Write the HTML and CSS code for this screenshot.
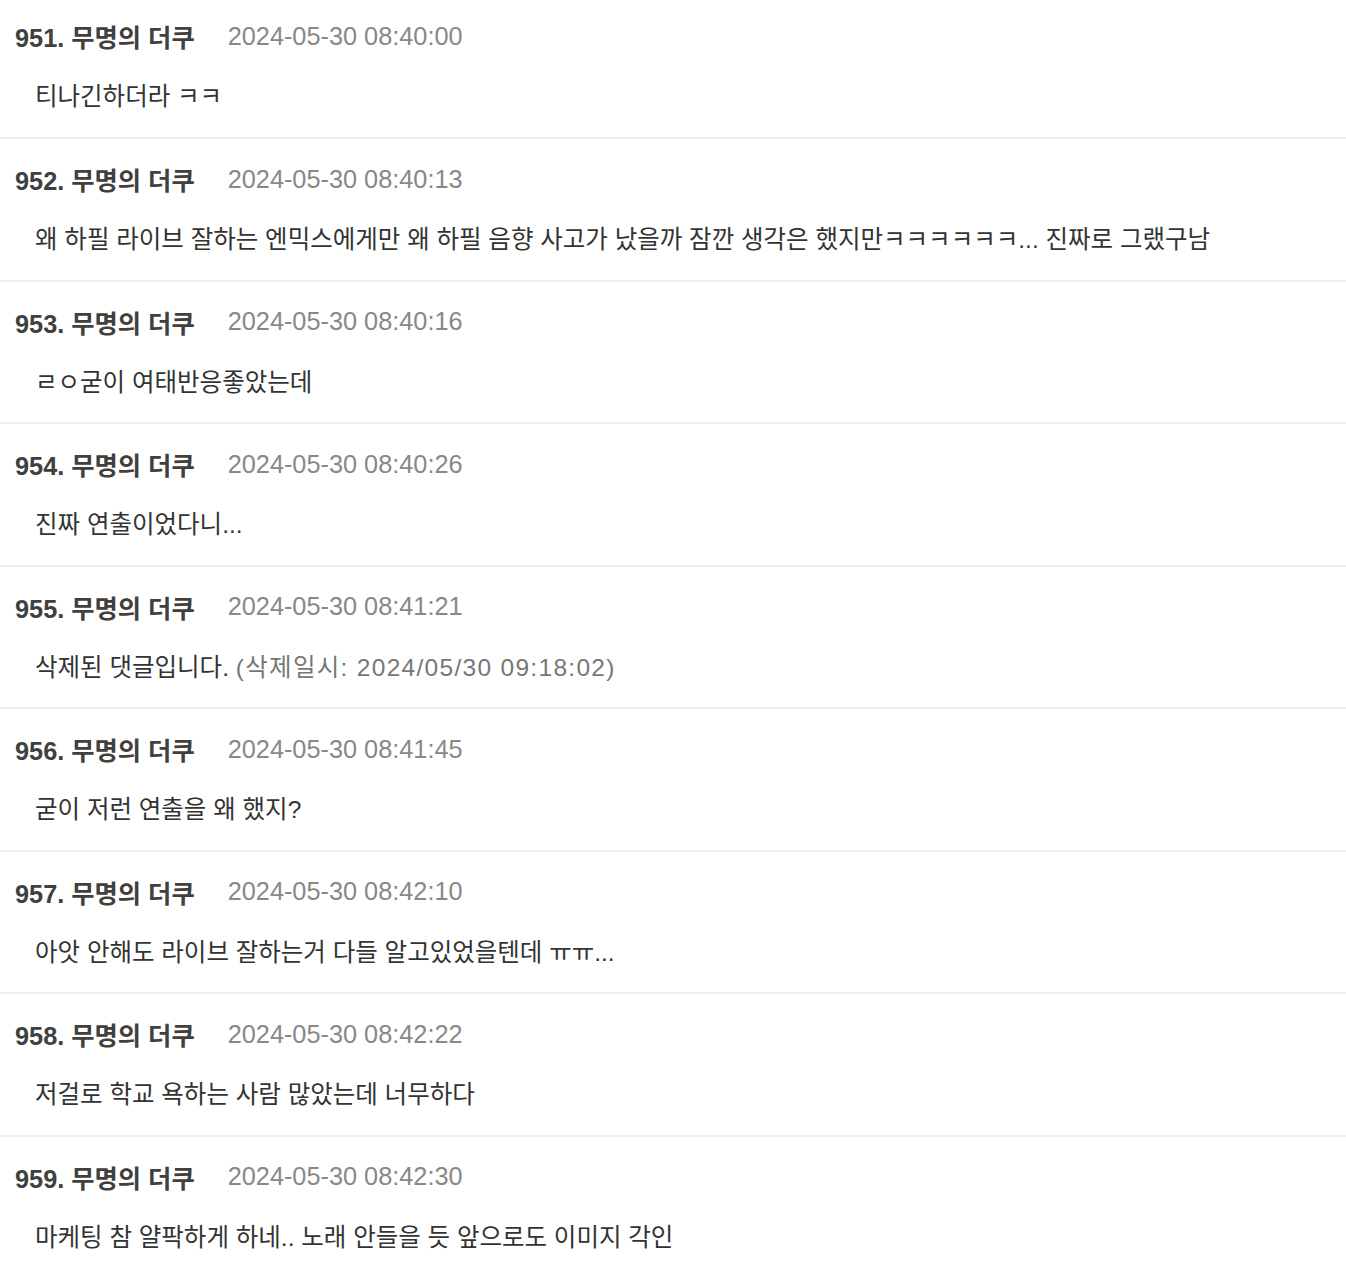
FILE: index.html
```html
<!DOCTYPE html>
<html lang="ko">
<head>
<meta charset="utf-8">
<title>댓글</title>
<link rel="stylesheet" href="styles.css">
</head>
<body>
<div class="comments">
  <div class="comment">
    <div class="head"><span class="name">951. 무명의 더쿠</span><span class="date">2024-05-30 08:40:00</span></div>
    <div class="body">티나긴하더라 ㅋㅋ</div>
  </div>
  <div class="comment">
    <div class="head"><span class="name">952. 무명의 더쿠</span><span class="date">2024-05-30 08:40:13</span></div>
    <div class="body">왜 하필 라이브 잘하는 엔믹스에게만 왜 하필 음향 사고가 났을까 잠깐 생각은 했지만ㅋㅋㅋㅋㅋㅋ... 진짜로 그랬구남</div>
  </div>
  <div class="comment">
    <div class="head"><span class="name">953. 무명의 더쿠</span><span class="date">2024-05-30 08:40:16</span></div>
    <div class="body">ㄹㅇ굳이 여태반응좋았는데</div>
  </div>
  <div class="comment">
    <div class="head"><span class="name">954. 무명의 더쿠</span><span class="date">2024-05-30 08:40:26</span></div>
    <div class="body">진짜 연출이었다니...</div>
  </div>
  <div class="comment">
    <div class="head"><span class="name">955. 무명의 더쿠</span><span class="date">2024-05-30 08:41:21</span></div>
    <div class="body">삭제된 댓글입니다. <span class="deleted">(삭제일시: 2024/05/30 09:18:02)</span></div>
  </div>
  <div class="comment">
    <div class="head"><span class="name">956. 무명의 더쿠</span><span class="date">2024-05-30 08:41:45</span></div>
    <div class="body">굳이 저런 연출을 왜 했지?</div>
  </div>
  <div class="comment">
    <div class="head"><span class="name">957. 무명의 더쿠</span><span class="date">2024-05-30 08:42:10</span></div>
    <div class="body">아앗 안해도 라이브 잘하는거 다들 알고있었을텐데 ㅠㅠ...</div>
  </div>
  <div class="comment">
    <div class="head"><span class="name">958. 무명의 더쿠</span><span class="date">2024-05-30 08:42:22</span></div>
    <div class="body">저걸로 학교 욕하는 사람 많았는데 너무하다</div>
  </div>
  <div class="comment">
    <div class="head"><span class="name">959. 무명의 더쿠</span><span class="date">2024-05-30 08:42:30</span></div>
    <div class="body">마케팅 참 얄팍하게 하네.. 노래 안들을 듯 앞으로도 이미지 각인</div>
  </div>
</div>
</body>
</html>
```

FILE: styles.css
```css
html, body {
  margin: 0;
  padding: 0;
  background: #ffffff;
}

body {
  font-family: "Liberation Sans", "Noto Sans CJK KR", sans-serif;
  color: #333333;
}

.comments {
  display: flex;
  flex-direction: column;
}

.comment {
  padding: 20px 15px 22.57px;
  border-bottom: 2px solid #eeeeee;
}

.comment:first-child {
  padding-top: 16px;
  padding-bottom: 23px;
}

.head {
  display: flex;
  align-items: center;
  height: 40px;
  gap: 33px;
}

.name {
  font-size: 25.3px;
  font-weight: bold;
  color: #404040;
}

.date {
  font-size: 25.3px;
  color: #888888;
}

.body {
  margin-top: 24px;
  height: 34px;
  line-height: 34px;
  padding-left: 20px;
  font-size: 24.5px;
  color: #333333;
}

.deleted {
  color: #777777;
  letter-spacing: 1.3px;
}
```
